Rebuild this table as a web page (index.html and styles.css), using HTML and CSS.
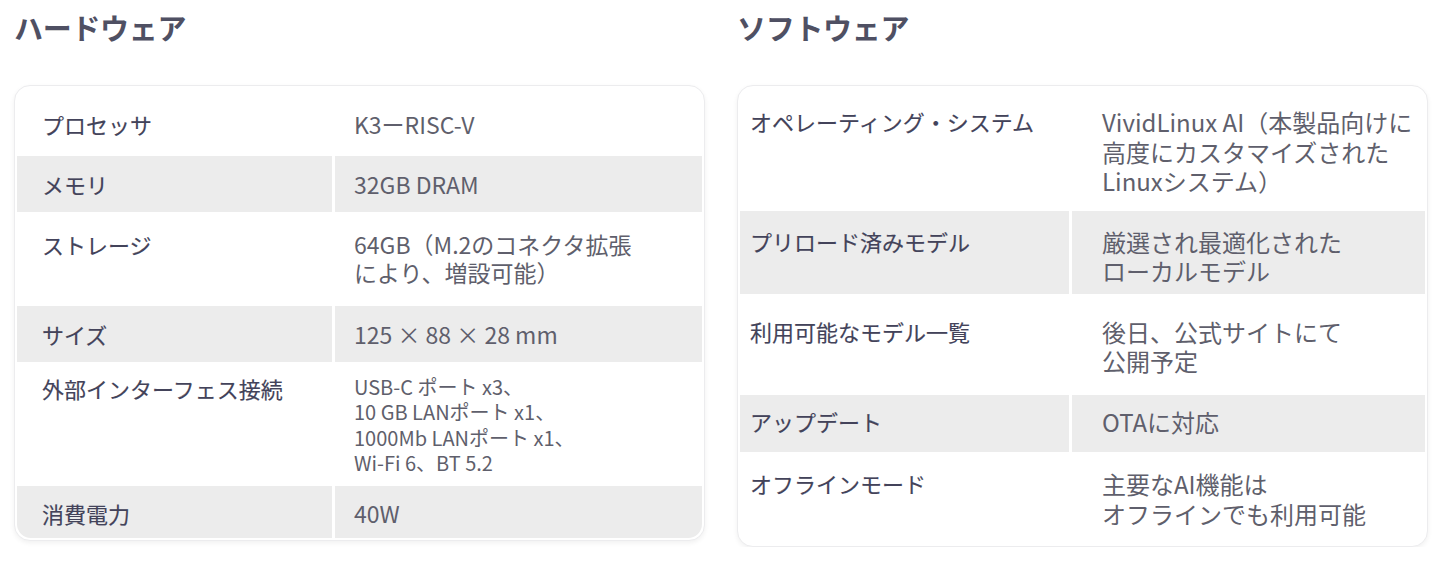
FILE: index.html
```html
<!DOCTYPE html>
<html lang="ja">
<head>
<meta charset="utf-8">
<title>仕様</title>
<link rel="stylesheet" href="styles.css">
</head>
<body>
<main class="page">
  <section class="col">
    <h2 class="heading">ハードウェア</h2>
    <div class="card">
      <div class="spec spec-hw">
        <div class="row r-h1"><div class="label">プロセッサ</div><div class="value">K3ーRISC-V</div></div>
        <div class="row alt r-h2"><div class="label">メモリ</div><div class="value">32GB DRAM</div></div>
        <div class="row r-h3"><div class="label">ストレージ</div><div class="value">64GB（M.2のコネクタ拡張<br>により、増設可能）</div></div>
        <div class="row alt r-h2"><div class="label">サイズ</div><div class="value">125 × 88 × 28 mm</div></div>
        <div class="row r-h5"><div class="label">外部インターフェス接続</div><div class="value small">USB-C ポート x3、<br>10 GB LANポート x1、<br>1000Mb LANポート x1、<br>Wi-Fi 6、BT 5.2</div></div>
        <div class="row alt r-h6"><div class="label">消費電力</div><div class="value">40W</div></div>
      </div>
    </div>
  </section>
  <section class="col">
    <h2 class="heading">ソフトウェア</h2>
    <div class="card">
      <div class="spec spec-sw">
        <div class="row r-s1"><div class="label">オペレーティング・システム</div><div class="value">VividLinux AI（本製品向けに<br>高度にカスタマイズされた<br>Linuxシステム）</div></div>
        <div class="row alt r-s2"><div class="label">プリロード済みモデル</div><div class="value">厳選され最適化された<br>ローカルモデル</div></div>
        <div class="row r-s3"><div class="label">利用可能なモデル一覧</div><div class="value">後日、公式サイトにて<br>公開予定</div></div>
        <div class="row alt r-s4"><div class="label">アップデート</div><div class="value">OTAに対応</div></div>
        <div class="row r-s5"><div class="label">オフラインモード</div><div class="value">主要なAI機能は<br>オフラインでも利用可能</div></div>
      </div>
    </div>
  </section>
</main>
</body>
</html>
```

FILE: styles.css
```css
* { box-sizing: border-box; }

html, body {
  margin: 0;
  padding: 0;
  background: #ffffff;
}

body {
  font-family: "Noto Sans CJK JP", "Noto Sans", sans-serif;
  color: #4d4d5f;
}

.page {
  display: grid;
  grid-template-columns: 691px 691px;
  column-gap: 32px;
  padding: 0 12px 0 14px;
}

.heading {
  margin: 7px 0 38px 0;
  font-size: 29px;
  line-height: 40px;
  font-weight: 700;
  color: #4f5063;
  letter-spacing: -0.3px;
}

.card {
  border: 1px solid #ececee;
  border-radius: 16px;
  padding: 2px;
  background: #ffffff;
  box-shadow: 0 2px 5px rgba(0, 0, 0, 0.06);
}

.spec {
  border-radius: 14px;
  overflow: hidden;
}

.row {
  display: grid;
  column-gap: 3px;
}

.spec-hw .row { grid-template-columns: 315px 1fr; }
.spec-sw .row { grid-template-columns: 329px 1fr; }

.row.alt .label,
.row.alt .value {
  background: #ececec;
}

.label {
  font-size: 22px;
  line-height: 28px;
  font-weight: 400;
  color: #43435a;
  -webkit-text-stroke: 0.15px #43435a;
}

.value {
  font-size: 23px;
  line-height: 28px;
  font-weight: 400;
  color: #5f5f6c;
}

.value.small {
  font-size: 20px;
  line-height: 25.3px;
}

.spec-hw .label { padding-left: 25px; }
.spec-hw .value { padding-left: 19px; }
.spec-sw .label { padding-left: 10px; }
.spec-sw .value { padding-left: 30px; font-size: 24px; line-height: 29.5px; }

/* hardware rows */
.r-h1 > div { padding-top: 22px; padding-bottom: 18px; }
.r-h2 > div { padding-top: 14px; padding-bottom: 14px; }
.r-h3 > div { padding-top: 18px; padding-bottom: 20px; }
.r-h5 > div { padding-top: 12px; padding-bottom: 11px; }
.r-h6 > div { padding-top: 13px; padding-bottom: 11px; }

/* software rows */
.r-s1 > div { padding-top: 19px; padding-bottom: 15px; }
.r-s2 > div { padding-top: 16px; padding-bottom: 8px; }
.r-s3 > div { padding-top: 23px; padding-bottom: 19px; }
.r-s4 > div { padding-top: 12px; padding-bottom: 16px; }
.r-s5 > div { padding-top: 17px; padding-bottom: 16px; }
```
